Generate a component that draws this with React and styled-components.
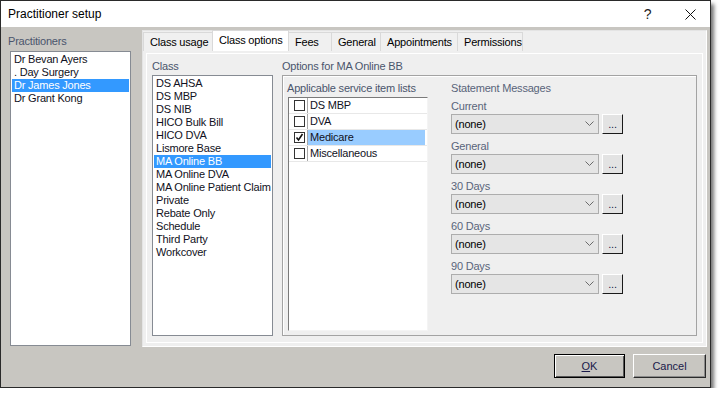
import React from 'react'
import styled, { createGlobalStyle } from 'styled-components'

const GlobalStyle = createGlobalStyle`
  body {
    margin: 0;
    background: #ffffff;
    font-family: 'Liberation Sans', Arial, sans-serif;
  }
`

const Window = styled.div`
  box-sizing: border-box;
  width: 711px;
  height: 388px;
  border: 1px solid #2a2a2a;
  background: #c8c6c1;
  box-shadow: 3px 4px 4px rgba(0, 0, 0, 0.55);
  display: flex;
  flex-direction: column;
  font-size: 11px;
  letter-spacing: -0.2px;
`

const TitleBar = styled.div`
  height: 26px;
  background: #ffffff;
  display: flex;
  align-items: center;
  padding-left: 7px;
`

const Title = styled.div`
  flex: 1;
  font-size: 12px;
  letter-spacing: 0;
  color: #000;
`

const TitleButton = styled.div`
  width: ${p => p.w}px;
  height: 26px;
  display: flex;
  align-items: center;
  justify-content: center;
  font-size: 14px;
  color: #222;
`

const Body = styled.div`
  flex: 1;
  display: flex;
  flex-direction: column;
  padding: 3px 3px 0 7px;
`

const MainRow = styled.div`
  display: flex;
  height: 317px;
  gap: 11px;
`

const LeftCol = styled.div`
  width: 123px;
  display: flex;
  flex-direction: column;
`

const Label = styled.div`
  height: 14px;
  line-height: 14px;
  color: ${p => p.dim ? '#59647a' : '#4a556c'};
  margin: ${p => p.m || '0'};
  white-space: nowrap;
`

const ListBox = styled.div`
  box-sizing: border-box;
  background: #ffffff;
  border: 1px solid #868b93;
  padding: 1px;
  width: ${p => p.w}px;
  height: ${p => p.h}px;
  margin-left: ${p => p.ml || 0}px;
  margin-top: ${p => p.mt || 0}px;
`

const ListItem = styled.div`
  height: 13px;
  line-height: 13px;
  padding-left: 2px;
  color: ${p => p.sel ? '#ffffff' : '#111122'};
  background: ${p => p.sel ? '#3399ff' : 'transparent'};
  white-space: nowrap;
`

const TabControl = styled.div`
  box-sizing: border-box;
  width: 565px;
  background: #efefef;
  border: 1px solid #e4e4e4;
  border-right-color: #ffffff;
  border-bottom-color: #ffffff;
  display: flex;
  flex-direction: column;
`

const TabStrip = styled.div`
  height: 20px;
  display: flex;
  align-items: flex-end;
  padding-left: 1px;
`

const Tab = styled.div`
  box-sizing: border-box;
  width: ${p => p.w}px;
  height: ${p => p.active ? 21 : 19}px;
  padding-left: 6px;
  line-height: ${p => p.active ? 18 : 19}px;
  background: ${p => p.active ? '#ffffff' : '#f0f0f0'};
  border: 1px solid #d9d9d9;
  border-bottom: none;
  margin-left: -1px;
  color: #000;
  white-space: nowrap;
  position: relative;
  z-index: ${p => p.active ? 1 : 0};
`

const Page = styled.div`
  flex: 1;
  margin: 2px 3px 3px 3px;
  border: 1px solid #ffffff;
  display: flex;
  gap: 9px;
  padding: 5px 5px 6px 5px;
`

const Column = styled.div`
  display: flex;
  flex-direction: column;
  width: ${p => p.w ? p.w + 'px' : 'auto'};
  flex: ${p => p.w ? 'none' : 1};
`

const GroupBox = styled.div`
  flex: 1;
  margin-top: 2px;
  border: 1px solid #a3a3a3;
  box-shadow: inset 1px 1px 0 #ffffff;
  display: flex;
  gap: 23px;
  padding: 5px 4px 4px 4px;
`

const CheckList = styled.div`
  box-sizing: border-box;
  width: 140px;
  flex: 1;
  margin: 2px 0 0 1px;
  background: #ffffff;
  border: 1px solid #7a7a7a;
  border-right-color: #f4f4f4;
  border-bottom-color: #f4f4f4;
`

const CheckRow = styled.div`
  display: flex;
  height: 16px;
  border-bottom: 1px solid #e8e8e8;
  box-sizing: border-box;
`

const CheckCell = styled.div`
  width: 19px;
  display: flex;
  align-items: center;
  padding-left: 5px;
  box-sizing: border-box;
  border-right: 1px solid #a8a8a8;
`

const Box = styled.div`
  box-sizing: border-box;
  width: 11px;
  height: 11px;
  border: 1px solid #333333;
  background: #ffffff;
  display: flex;
  align-items: center;
  justify-content: center;
`

const CheckText = styled.div`
  flex: 1;
  line-height: 15px;
  padding-left: 2px;
  margin-right: 2px;
  color: #111122;
  background: ${p => p.sel ? '#99ccff' : 'transparent'};
`

const Statements = styled.div`
  display: flex;
  flex-direction: column;
`

const Field = styled.div`
  display: flex;
  flex-direction: column;
  margin-top: ${p => p.first ? 4 : 5}px;
`

const ComboRow = styled.div`
  display: flex;
  gap: 3px;
  margin-top: 1px;
`

const Combo = styled.div`
  box-sizing: border-box;
  width: 148px;
  height: 20px;
  background: #e5e5e5;
  border: 1px solid #adadad;
  display: flex;
  align-items: center;
  justify-content: space-between;
  padding: 0 4px 0 3px;
  color: #000;
`

const DotsButton = styled.div`
  box-sizing: border-box;
  width: 21px;
  height: 20px;
  background: #e3e3e3;
  border: 1px solid;
  border-color: #ffffff #1a1a1a #1a1a1a #ffffff;
  display: flex;
  align-items: center;
  justify-content: center;
  color: #1a1a4a;
  font-size: 11px;
  line-height: 1;
`

const Footer = styled.div`
  display: flex;
  justify-content: flex-end;
  gap: 8px;
  padding-top: 7px;
  padding-right: 1px;
`

const Button = styled.div`
  box-sizing: border-box;
  width: ${p => p.primary ? 71 : 73}px;
  height: 24px;
  display: flex;
  align-items: center;
  justify-content: center;
  background: #c8c6c1;
  color: #1a1a4a;
  border: 1px solid;
  border-color: ${p => p.primary ? '#000000' : '#ffffff #2a2a2a #2a2a2a #ffffff'};
  box-shadow: ${p => p.primary ? 'inset 1px 1px 0 #ffffff, inset -1px -1px 0 #555' : 'inset -1px -1px 0 #8a8a8a'};
  letter-spacing: 0;
`

const Chevron = () => (
  <svg width="9" height="6" viewBox="0 0 9 6">
    <path d="M0.5 0.5 L4.5 4.5 L8.5 0.5" fill="none" stroke="#6a6a6a" strokeWidth="1" />
  </svg>
)

const CloseIcon = () => (
  <svg width="11" height="11" viewBox="0 0 11 11">
    <path d="M0.5 0.5 L10.5 10.5 M10.5 0.5 L0.5 10.5" stroke="#111" strokeWidth="1" />
  </svg>
)

const Check = () => (
  <svg width="9" height="9" viewBox="0 0 9 9">
    <path d="M1.5 4.5 L3.5 7 L7.5 1" fill="none" stroke="#111" strokeWidth="1.6" />
  </svg>
)

const practitioners = ['Dr Bevan Ayers', '. Day Surgery', 'Dr James Jones', 'Dr Grant Kong']
const classes = ['DS AHSA', 'DS MBP', 'DS NIB', 'HICO Bulk Bill', 'HICO DVA', 'Lismore Base', 'MA Online BB',
  'MA Online DVA', 'MA Online Patient Claim', 'Private', 'Rebate Only', 'Schedule', 'Third Party', 'Workcover']
const tabs = [
  { name: 'Class usage', w: 70 },
  { name: 'Class options', w: 77, active: true },
  { name: 'Fees', w: 44 },
  { name: 'General', w: 50 },
  { name: 'Appointments', w: 78 },
  { name: 'Permissions', w: 66 }
]
const serviceLists = [
  { name: 'DS MBP' },
  { name: 'DVA' },
  { name: 'Medicare', checked: true },
  { name: 'Miscellaneous' }
]
const messages = ['Current', 'General', '30 Days', '60 Days', '90 Days']

const App = () => {
  return (
    <>
      <GlobalStyle />
      <Window>
        <TitleBar>
          <Title>Practitioner setup</Title>
          <TitleButton w={45}>?</TitleButton>
          <TitleButton w={40}><CloseIcon /></TitleButton>
        </TitleBar>
        <Body>
          <MainRow>
            <LeftCol>
              <Label m="4px 0 3px 0">Practitioners</Label>
              <ListBox w={121} h={295} ml={2}>
                {practitioners.map((p, i) => (
                  <ListItem key={i} sel={p === 'Dr James Jones'}>{p}</ListItem>
                ))}
              </ListBox>
            </LeftCol>
            <TabControl>
              <TabStrip>
                {tabs.map((t, i) => (
                  <Tab key={i} w={t.w} active={t.active}>{t.name}</Tab>
                ))}
              </TabStrip>
              <Page>
                <Column w={121}>
                  <Label>Class</Label>
                  <ListBox w={121} h={261} mt={2}>
                    {classes.map((c, i) => (
                      <ListItem key={i} sel={c === 'MA Online BB'}>{c}</ListItem>
                    ))}
                  </ListBox>
                </Column>
                <Column>
                  <Label>Options for MA Online BB</Label>
                  <GroupBox>
                    <Column w={141}>
                      <Label>Applicable service item lists</Label>
                      <CheckList>
                        {serviceLists.map((s, i) => (
                          <CheckRow key={i}>
                            <CheckCell>
                              <Box>{s.checked && <Check />}</Box>
                            </CheckCell>
                            <CheckText sel={s.checked}>{s.name}</CheckText>
                          </CheckRow>
                        ))}
                      </CheckList>
                    </Column>
                    <Statements>
                      <Label dim>Statement Messages</Label>
                      {messages.map((m, i) => (
                        <Field key={i} first={i === 0}>
                          <Label dim>{m}</Label>
                          <ComboRow>
                            <Combo>
                              <span>(none)</span>
                              <Chevron />
                            </Combo>
                            <DotsButton>...</DotsButton>
                          </ComboRow>
                        </Field>
                      ))}
                    </Statements>
                  </GroupBox>
                </Column>
              </Page>
            </TabControl>
          </MainRow>
          <Footer>
            <Button primary><span><u>O</u>K</span></Button>
            <Button>Cancel</Button>
          </Footer>
        </Body>
      </Window>
    </>
  )
}

export default App
